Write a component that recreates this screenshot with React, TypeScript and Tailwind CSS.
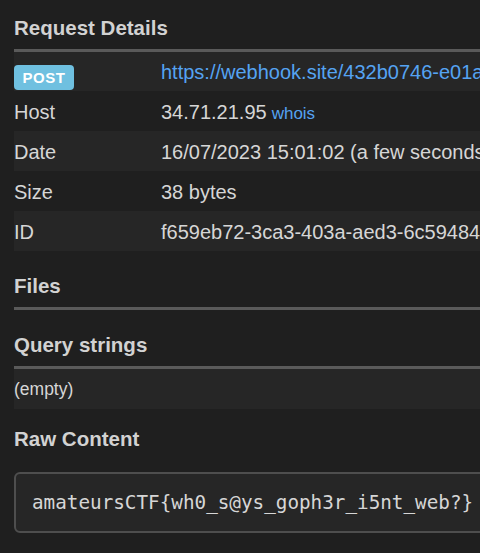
const rows = [
  { label: "Host", value: "34.71.21.95", extra: "whois" },
  { label: "Date", value: "16/07/2023 15:01:02 (a few seconds ago)" },
  { label: "Size", value: "38 bytes" },
  { label: "ID", value: "f659eb72-3ca3-403a-aed3-6c59484f1a2b" },
]

const Heading = ({ children, line = true }: { children: React.ReactNode; line?: boolean }) => (
  <h2
    className={
      "font-bold text-[20.5px] leading-[28px] text-[#d2d2d2] " +
      (line ? "pb-[7px] border-b-[3px] border-[#5a5a5a]" : "")
    }
  >
    {children}
  </h2>
)

export default function App() {
  return (
    <div
      className="w-[480px] h-[553px] overflow-hidden bg-[#1f1f1f] text-[#d6d6d6]"
      style={{ fontFamily: '"Liberation Sans", Arial, sans-serif' }}
    >
      <div className="w-[640px] pl-[14px] pt-[14px]">
        {/* Request Details */}
        <Heading>Request Details</Heading>
        <div className="text-[20px] leading-[28px]">
          <div className="flex h-[39px] items-start pt-[6px] bg-[#262626]">
            <div className="w-[147px] shrink-0 pt-[4px]">
              <span className="inline-flex items-center justify-center w-[60px] h-[25px] rounded-[4px] bg-[#6fc0e0] text-white font-bold text-[15px] leading-none tracking-[0.5px]">
                POST
              </span>
            </div>
            <a className="text-[#55a3f2] whitespace-nowrap">
              https://webhook.site/432b0746-e01a-4c2b
            </a>
          </div>
          {rows.map((r, i) => (
            <div
              key={r.label}
              className={
                "flex h-10 pt-[7px] " + (i % 2 === 1 ? "bg-[#262626]" : "")
              }
            >
              <div className="w-[147px] shrink-0">{r.label}</div>
              <div className="whitespace-nowrap">
                {r.value}
                {r.extra && (
                  <a className="ml-[5px] text-[17px] text-[#55a3f2]">{r.extra}</a>
                )}
              </div>
            </div>
          ))}
        </div>

        {/* Files */}
        <div className="mt-[21px]">
          <Heading>Files</Heading>
        </div>

        {/* Query strings */}
        <div className="mt-[21px]">
          <Heading>Query strings</Heading>
        </div>
        <div className="h-10 bg-[#262626] text-[17.5px] leading-[22px] pt-[9px]">(empty)</div>

        {/* Raw Content */}
        <div className="mt-[16px]">
          <Heading line={false}>Raw Content</Heading>
        </div>
        <pre
          className="mt-[19px] border-2 border-[#4e4e4e] rounded-[6px] bg-[#262626] px-[16px] pt-[15px] pb-[14px] text-[19.3px] leading-[28px] text-[#d6d6d6]"
          style={{ fontFamily: '"DejaVu Sans Mono", "Liberation Mono", monospace' }}
        >
          amateursCTF{"{"}wh0_s@ys_goph3r_i5nt_web?{"}"}
        </pre>
      </div>
    </div>
  )
}
